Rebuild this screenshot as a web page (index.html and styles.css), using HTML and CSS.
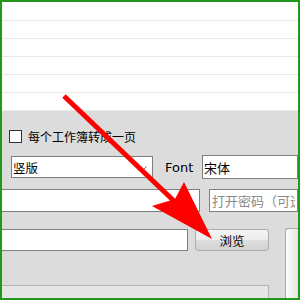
FILE: index.html
```html
<!doctype html>
<html lang="zh-CN">
<head>
  <meta charset="UTF-8">
  <meta name="viewport" content="width=device-width, initial-scale=1.0">
  <title>Excel 转 PDF</title>
  <link rel="stylesheet" href="styles.css">
</head>
<body>
  <div class="frame">
    <div class="list">
      <div class="list-row"></div>
      <div class="list-row"></div>
      <div class="list-row"></div>
      <div class="list-row"></div>
      <div class="list-row"></div>
      <div class="list-row"></div>
    </div>

    <div class="panel">
      <label class="check-row">
        <span class="checkbox"></span>
        <span>每个工作簿转成一页</span>
      </label>

      <div class="row font-row">
        <div class="select">
          <span>竖版</span>
          <svg class="chevron" width="7" height="4" viewBox="0 0 7 4">
            <polyline points="0.5,0.5 3.5,3.5 6.5,0.5" fill="none" stroke="#6a6a6a" stroke-width="1"/>
          </svg>
        </div>
        <span class="font-label">Font</span>
        <input type="text" class="field font-field" value="宋体">
      </div>

      <div class="row path-row">
        <input type="text" class="field path-field">
        <input type="text" class="field password-field" placeholder="打开密码（可选）">
      </div>

      <div class="bottom">
        <div class="bottom-left">
          <div class="row browse-row">
            <input type="text" class="field out-field">
            <button class="browse">浏览</button>
          </div>
          <div class="log-box"></div>
        </div>
        <div class="side-box"></div>
      </div>
    </div>

    <!-- annotation arrow drawn over the dialog -->
    <svg class="arrow" width="300" height="300" viewBox="0 0 300 300">
      <line x1="64" y1="96" x2="174" y2="201" stroke="#ff0000" stroke-width="5"/>
      <polygon points="212,239 184,182 175,199 152,206" fill="#ff0000"/>
    </svg>
  </div>
</body>
</html>
```

FILE: styles.css
```css
* {
  box-sizing: border-box;
}

body {
  margin: 0;
  font-family: "Noto Sans CJK SC", "DejaVu Sans", sans-serif;
  font-size: 12px;
  color: #000;
}

.frame {
  position: relative;
  width: 300px;
  height: 300px;
  border: 2px solid #22991a;
  overflow: hidden;
  background-color: #fff;
  display: flex;
  flex-direction: column;
}

.list {
  padding-top: 1px;
  background-color: #fff;
}

.list-row {
  height: 18px;
  border-bottom: 1px solid #e8e8e8;
}

.panel {
  flex: 1;
  background-color: #dcdcdc;
  display: flex;
  flex-direction: column;
}

.check-row {
  display: flex;
  align-items: center;
  gap: 6px;
  height: 15px;
  margin-top: 18px;
  padding-left: 7px;
  line-height: 15px;
}

.checkbox {
  width: 13px;
  height: 13px;
  border: 1px solid #333;
  background-color: #fff;
}

.row {
  display: flex;
  align-items: center;
}

.font-row {
  height: 24px;
  margin-top: 11px;
  padding-left: 9px;
}

.select {
  width: 142px;
  height: 22px;
  display: flex;
  align-items: center;
  justify-content: space-between;
  padding: 0 5px 0 1px;
  border: 1px solid #7f7f7f;
  background-color: #fff;
  font-size: 12.5px;
}

.chevron {
  margin-top: 1px;
}

.font-label {
  width: 37px;
  margin-left: 12px;
  font-family: "DejaVu Sans", sans-serif;
  font-size: 13px;
}

.field {
  height: 24px;
  margin: 0;
  padding: 0 2px;
  border: 1px solid #7f7f7f;
  border-radius: 0;
  background-color: #fff;
  font-family: "Noto Sans CJK SC", sans-serif;
  font-size: 13px;
  color: #000;
  outline: none;
}

.font-field {
  flex: 1;
  min-width: 0;
  padding-left: 1px;
}

.path-row {
  height: 23px;
  margin-top: 10px;
  gap: 9px;
}

.path-row .field {
  height: 23px;
}

.path-field {
  width: 198px;
  border-left: none;
}

.password-field {
  flex: 1;
  min-width: 0;
}

.password-field::placeholder {
  color: #8a8a8a;
}

.bottom {
  flex: 1;
  display: flex;
  gap: 16px;
  margin-top: 16px;
}

.bottom-left {
  width: 267px;
  display: flex;
  flex-direction: column;
}

.browse-row {
  height: 22px;
  margin-top: 1px;
  gap: 7px;
}

.out-field {
  width: 186px;
  height: 22px;
  border-left: none;
}

.browse {
  width: 74px;
  height: 22px;
  padding: 0;
  border: 1px solid #acacac;
  border-radius: 3px;
  background: linear-gradient(#f4f4f4 0%, #ececec 50%, #dedede 51%, #d2d2d2 100%);
  font-family: "Noto Sans CJK SC", sans-serif;
  font-size: 12.5px;
  color: #000;
}

.log-box {
  flex: 1;
  margin-top: 34px;
  border-top: 1px solid #b4b4b4;
  border-right: 1px solid #b4b4b4;
  background-color: #e6e6e6;
}

.side-box {
  flex: 1;
  border-top: 1px solid #a8a8a8;
  border-left: 1px solid #a8a8a8;
  border-top-left-radius: 3px;
  background: linear-gradient(to right, #fdfdfd, #e4e4e4);
}

.arrow {
  position: absolute;
  left: -2px;
  top: -2px;
  pointer-events: none;
}
```
